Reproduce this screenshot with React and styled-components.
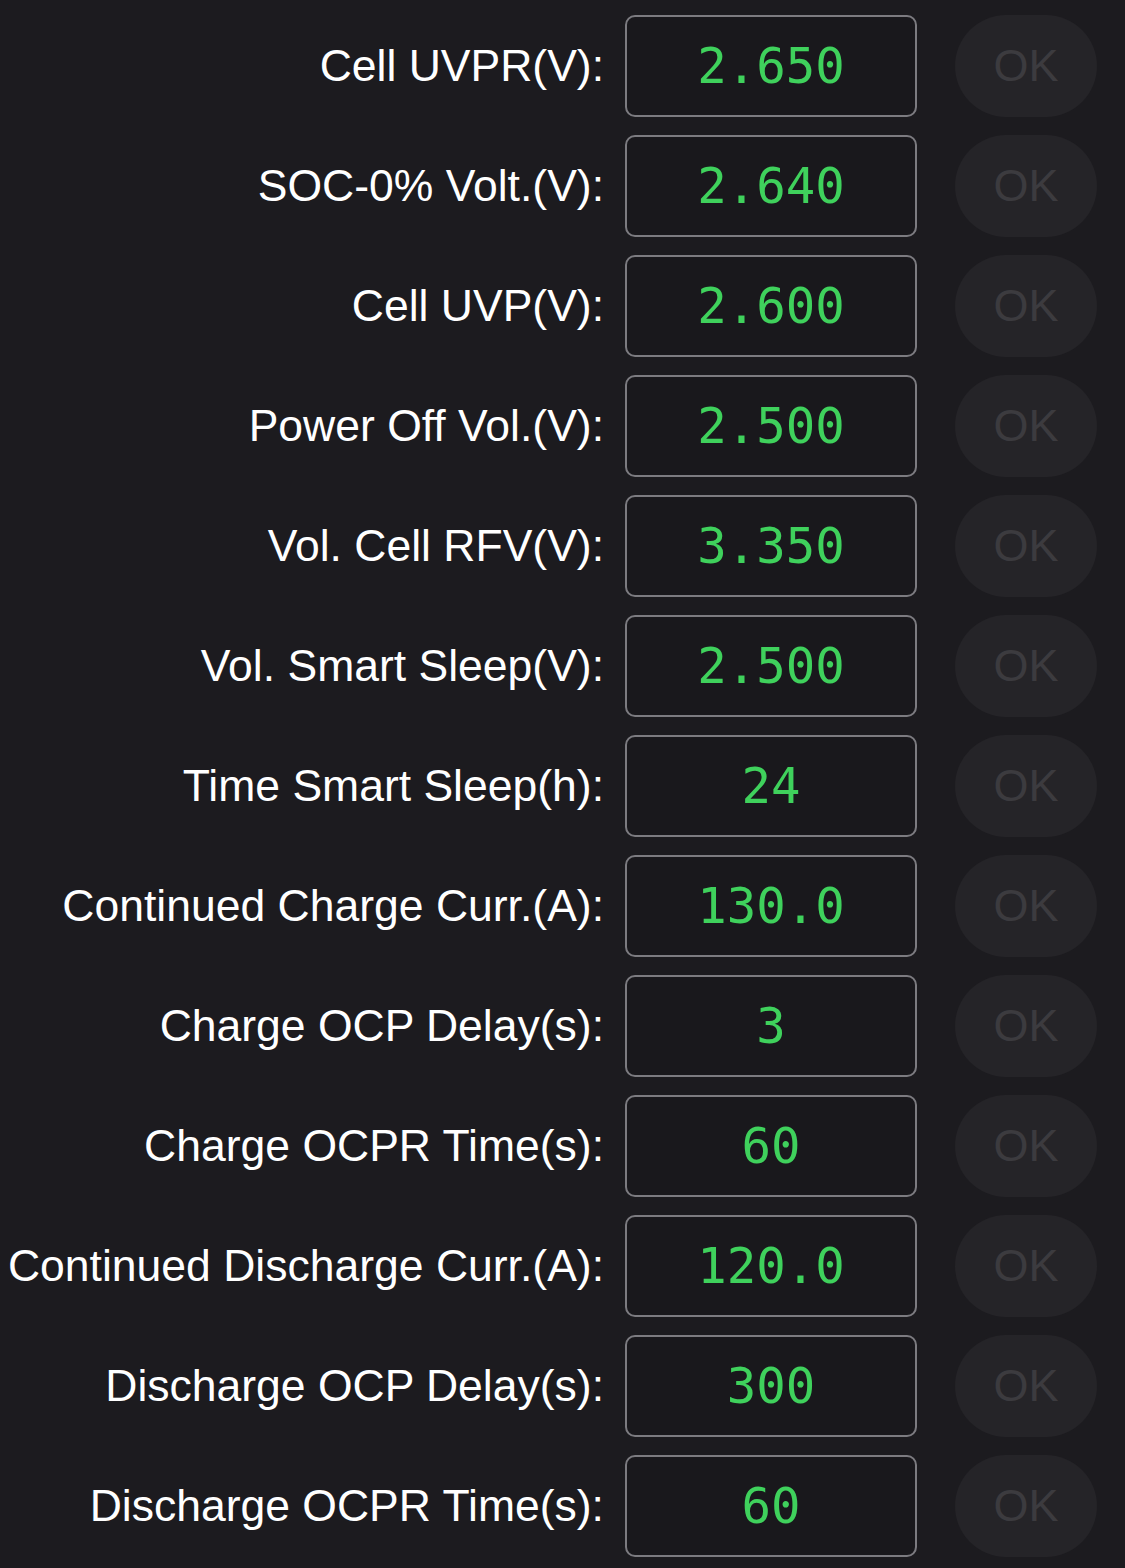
import styled, { createGlobalStyle } from "styled-components";

const GlobalStyle = createGlobalStyle`
  html, body {
    margin: 0;
    padding: 0;
    background: #1c1b1f;
  }
  * {
    box-sizing: border-box;
  }
`;

const params = [
  { label: "Cell UVPR(V):", value: "2.650" },
  { label: "SOC-0% Volt.(V):", value: "2.640" },
  { label: "Cell UVP(V):", value: "2.600" },
  { label: "Power Off Vol.(V):", value: "2.500" },
  { label: "Vol. Cell RFV(V):", value: "3.350" },
  { label: "Vol. Smart Sleep(V):", value: "2.500" },
  { label: "Time Smart Sleep(h):", value: "24" },
  { label: "Continued Charge Curr.(A):", value: "130.0" },
  { label: "Charge OCP Delay(s):", value: "3" },
  { label: "Charge OCPR Time(s):", value: "60" },
  { label: "Continued Discharge Curr.(A):", value: "120.0" },
  { label: "Discharge OCP Delay(s):", value: "300" },
  { label: "Discharge OCPR Time(s):", value: "60" },
];

const ParamRow = ({ label, value }) => (
  <Row>
    <Label>{label}</Label>
    <ValueBox>{value}</ValueBox>
    <OkButton disabled>OK</OkButton>
  </Row>
);

const App = () => {
  return (
    <>
      <GlobalStyle />
      <Wrapper>
        {params.map((p) => (
          <ParamRow key={p.label} label={p.label} value={p.value} />
        ))}
      </Wrapper>
    </>
  );
};

const Wrapper = styled.main`
  width: 1125px;
  min-height: 1568px;
  padding: 15px 28px 11px 0;
  display: flex;
  flex-direction: column;
  gap: 18px;
  background: #1c1b1f;
`;

const Row = styled.div`
  display: flex;
  align-items: center;
  height: 102px;
`;

const Label = styled.span`
  flex: 1;
  text-align: right;
  white-space: nowrap;
  font-family: "Liberation Sans", Arial, sans-serif;
  font-size: 44.5px;
  color: #ffffff;
`;

const ValueBox = styled.div`
  width: 292px;
  height: 102px;
  margin-left: 21px;
  display: flex;
  align-items: center;
  justify-content: center;
  border: 2px solid #7c7b80;
  border-radius: 10px;
  background: #19181c;
  font-family: "DejaVu Sans Mono", "Liberation Mono", monospace;
  font-size: 49px;
  color: #3fd15c;
`;

const OkButton = styled.button`
  width: 142px;
  height: 102px;
  margin-left: 38px;
  border: none;
  border-radius: 51px;
  background: #252428;
  font-family: "Liberation Sans", Arial, sans-serif;
  font-size: 45px;
  color: #3c3b3f;
  padding: 0;
`;

export default App;
